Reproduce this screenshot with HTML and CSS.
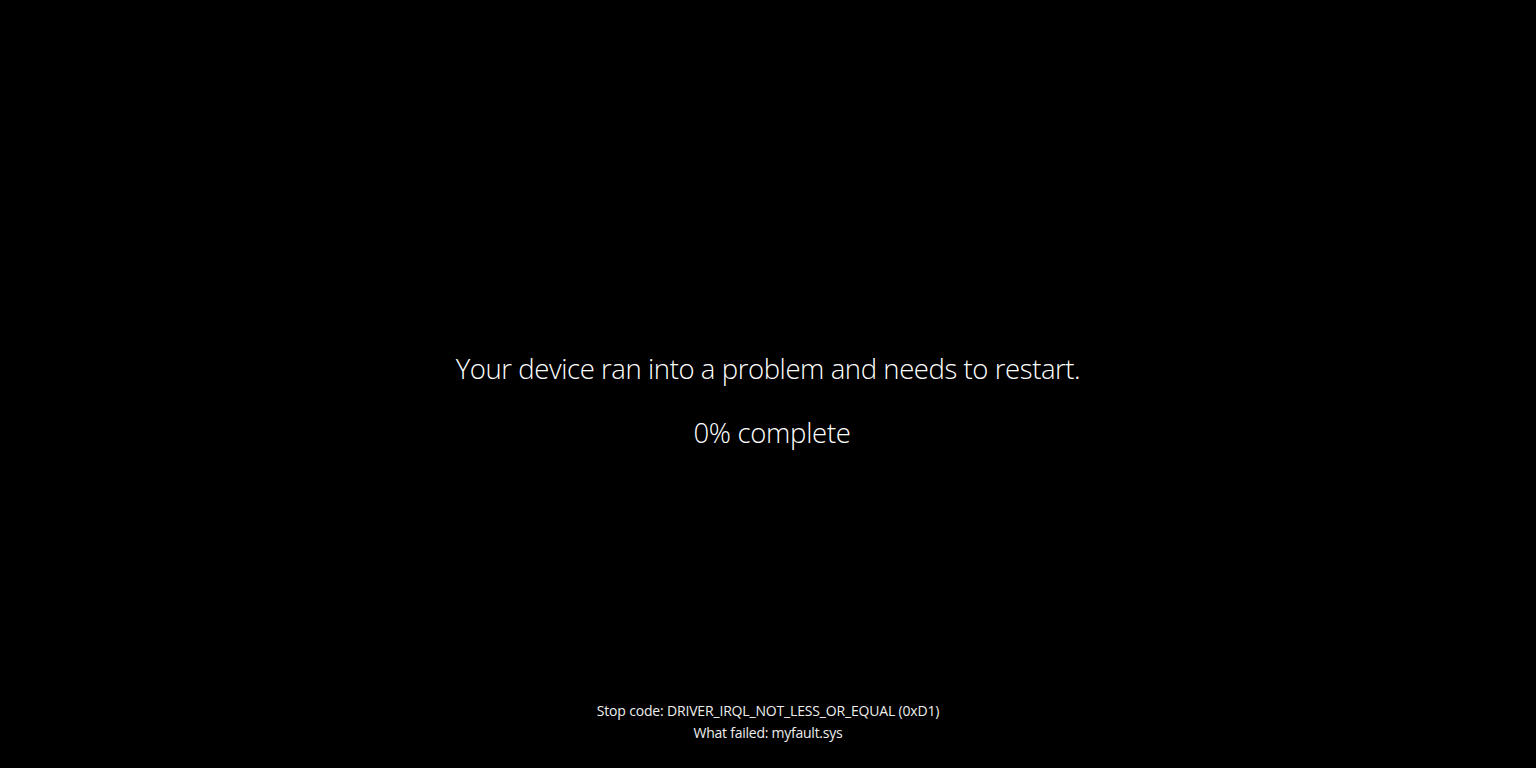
FILE: index.html
```html
<!DOCTYPE html>
<html lang="en">
<head>
<meta charset="utf-8">
<title>Your device ran into a problem</title>
<link rel="stylesheet" href="styles.css">
</head>
<body>
<div class="screen">
  <div class="center">
    <p class="headline">Your device ran into a problem and needs to restart.</p>
    <p class="progress">0% complete</p>
  </div>
  <div class="footer">
    <p class="line">Stop code: DRIVER_IRQL_NOT_LESS_OR_EQUAL (0xD1)</p>
    <p class="line">What failed: myfault.sys</p>
  </div>
</div>
</body>
</html>
```
FILE: styles.css
```css
html, body {
  margin: 0;
  padding: 0;
  background: #000;
}
.screen {
  height: 768px;
  display: flex;
  flex-direction: column;
  align-items: center;
  color: #fff;
  font-family: "Open Sans", "Noto Sans", sans-serif;
}
.center {
  padding-top: 349px;
  flex: 1;
  display: flex;
  flex-direction: column;
  align-items: center;
}
.headline {
  margin: 0;
  font-size: 27.5px;
  font-weight: 300;
  letter-spacing: -0.42px;
  line-height: 40px;
}
.progress {
  margin: 24px 0 0;
  padding-left: 8px;
  font-size: 27.5px;
  font-weight: 300;
  letter-spacing: -0.3px;
  line-height: 40px;
}
.footer {
  padding-bottom: 24px;
  display: flex;
  flex-direction: column;
  align-items: center;
  color: #eee;
}
.line {
  margin: 0;
  font-size: 14px;
  letter-spacing: -0.17px;
  line-height: 22px;
}
.line + .line {
  letter-spacing: -0.25px;
}
```
